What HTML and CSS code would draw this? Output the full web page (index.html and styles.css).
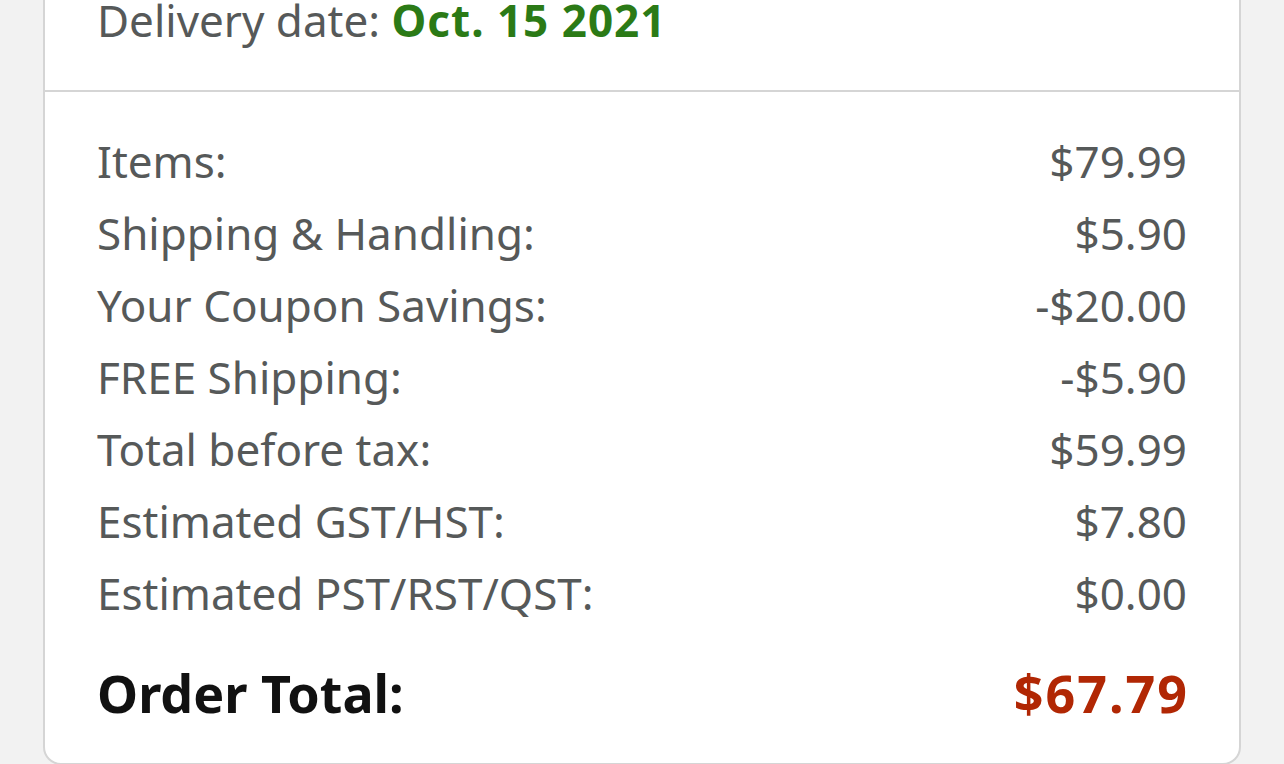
FILE: index.html
```html
<!DOCTYPE html>
<html lang="en">
<head>
    <meta charset="UTF-8">
    <meta name="viewport" content="width=device-width, initial-scale=1.0">
    <title>Order Summary</title>
    <link rel="stylesheet" href="styles.css">
</head>
<body>
    <div class="card">
        <!-- delivery -->
        <div class="delivery">
            Delivery date: <span class="date">Oct. 15 2021</span>
        </div>

        <!-- summary -->
        <div class="summary">
            <div class="row"><span>Items:</span><span>$79.99</span></div>
            <div class="row"><span>Shipping &amp; Handling:</span><span>$5.90</span></div>
            <div class="row"><span>Your Coupon Savings:</span><span>-$20.00</span></div>
            <div class="row"><span>FREE Shipping:</span><span>-$5.90</span></div>
            <div class="row"><span>Total before tax:</span><span>$59.99</span></div>
            <div class="row"><span>Estimated GST/HST:</span><span>$7.80</span></div>
            <div class="row"><span>Estimated PST/RST/QST:</span><span>$0.00</span></div>
            <div class="row total"><span>Order Total:</span><span class="price">$67.79</span></div>
        </div>
    </div>
</body>
</html>
```

FILE: styles.css
```css
:root {
    --text-color: #565959;
    --border-color: #d5d5d5;
}

* {
    box-sizing: border-box;
    margin: 0;
    padding: 0;
}

body {
    font-family: 'Noto Sans', 'Open Sans', sans-serif;
    background-color: #f2f2f2;
    color: var(--text-color);
    height: 764px;
    overflow: hidden;
}

.card {
    width: 1198px;
    margin: -40px 0 0 43px;
    background: white;
    border: 2px solid var(--border-color);
    border-radius: 0 0 18px 18px;
}

.delivery {
    font-size: 44px;
    line-height: 72px;
    padding: 22px 52px 34px;
    border-bottom: 2px solid var(--border-color);
}

.date {
    color: #2b7a16;
    font-weight: 700;
    letter-spacing: 1px;
}

.summary {
    padding: 33px 52px 34px;
}

.row {
    display: flex;
    justify-content: space-between;
    font-size: 44px;
    line-height: 72px;
}

.row.total {
    margin-top: 28px;
    font-size: 52px;
    font-weight: 700;
    color: #111;
}

.price {
    color: #b12704;
    letter-spacing: 2px;
    margin-right: -2px;
}
```
